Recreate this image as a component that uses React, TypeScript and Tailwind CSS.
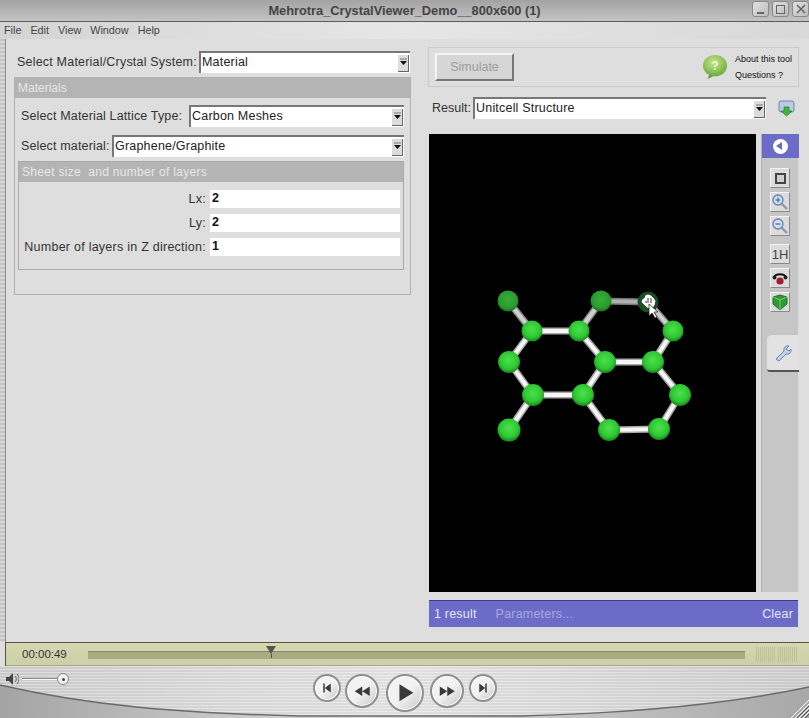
const font = "font-['Liberation_Sans',Arial,sans-serif]";

const atoms = [
  { x: 508, y: 301, r: 10.5, dim: true },
  { x: 601, y: 301, r: 10.5, dim: true },
  { x: 648, y: 302, r: 10.5, dim: true, dark: true },
  { x: 532, y: 331, r: 10.5 },
  { x: 579, y: 331, r: 10.5 },
  { x: 673, y: 331, r: 10.5 },
  { x: 509, y: 362, r: 11 },
  { x: 605, y: 362, r: 11 },
  { x: 653, y: 362, r: 11 },
  { x: 533, y: 395, r: 11 },
  { x: 583, y: 395, r: 11 },
  { x: 680, y: 395, r: 11 },
  { x: 509, y: 430, r: 11.5 },
  { x: 609, y: 430, r: 11 },
  { x: 659, y: 429, r: 11 },
];

const bonds = [
  [0, 3], [3, 4], [4, 1], [1, 2], [2, 5], [3, 6], [6, 9], [9, 10], [4, 7],
  [7, 10], [7, 8], [8, 5], [8, 11], [11, 14], [14, 13], [13, 10], [9, 12],
];

function Molecule() {
  return (
    <svg viewBox="429 134 327 458" className="w-full h-full block">
      <defs>
        <radialGradient id="atom" cx="0.5" cy="0.42" r="0.6">
          <stop offset="0" stopColor="#4ce24c" />
          <stop offset="0.65" stopColor="#2fc832" />
          <stop offset="1" stopColor="#127f18" />
        </radialGradient>
        <radialGradient id="atomDim" cx="0.5" cy="0.42" r="0.6">
          <stop offset="0" stopColor="#36b038" />
          <stop offset="0.7" stopColor="#2a9a2e" />
          <stop offset="1" stopColor="#116a16" />
        </radialGradient>
        <radialGradient id="atomDark" cx="0.5" cy="0.5" r="0.6">
          <stop offset="0" stopColor="#226e2a" />
          <stop offset="1" stopColor="#114418" />
        </radialGradient>
      </defs>
      {bonds.map(([a, b], i) => {
        const top = atoms[a].dim && atoms[b].dim;
        const mid = atoms[a].dim || atoms[b].dim;
        return (
          <g key={i}>
            <line
              x1={atoms[a].x}
              y1={atoms[a].y}
              x2={atoms[b].x}
              y2={atoms[b].y}
              stroke={top ? "#777" : mid ? "#8c8c8c" : "#a8a8a8"}
              strokeWidth="7"
            />
            <line
              x1={atoms[a].x}
              y1={atoms[a].y}
              x2={atoms[b].x}
              y2={atoms[b].y}
              stroke={top ? "#b0b0b0" : mid ? "#cfcfcf" : "#f6f6f6"}
              strokeWidth="4"
            />
          </g>
        );
      })}
      {atoms.map((a, i) => (
        <circle
          key={i}
          cx={a.x}
          cy={a.y}
          r={a.r}
          fill={a.dark ? "url(#atomDark)" : a.dim ? "url(#atomDim)" : "url(#atom)"}
        />
      ))}
      <path
        d="M648 294l3 1 3 3 2 3-1 4-2 3-3 1-3-1-3-3-3-3 1-3 2-1 1-3z"
        fill="#fff"
        stroke="#111"
        strokeWidth="0.7"
      />
      <path d="M648 298v5M651 298v5M645 302h2" stroke="#222" strokeWidth="0.9" />
      <path d="M649 304v12l3-3 3 5 2-1-3-5h4z" fill="#fff" stroke="#111" strokeWidth="0.7" />
    </svg>
  );
}

function Select({ value, className }: { value: string; className: string }) {
  return (
    <div
      className={`h-[22px] bg-white border-t-2 border-l-2 border-t-[#777] border-l-[#777] flex items-center justify-between pl-[1px] pr-[1px] ${className}`}
    >
      <span className="text-[12.5px] text-[#222] tracking-[0.2px] pb-[2px]">{value}</span>
      <span className="w-[11px] h-[17px] bg-[#dcdcdc] border-r border-b border-[#666] flex items-center justify-center">
        <svg viewBox="0 0 9 9" className="w-[9px] h-[9px]">
          <path d="M1 3h7L4.5 7z" fill="#111" />
          <path d="M1 1h7" stroke="#777" />
        </svg>
      </span>
    </div>
  );
}

function ParamRow({ label, value }: { label: string; value: string }) {
  return (
    <div className="flex items-center h-[18px]">
      <span className="w-[187px] text-right pr-[1px] text-[12.5px] text-[#333] tracking-[0.25px] whitespace-nowrap">{label}</span>
      <div className="ml-[3px] w-[190px] h-[18px] bg-white pl-[2px] text-[12.5px] font-bold text-[#111] leading-[17px]">
        {value}
      </div>
    </div>
  );
}

function ToolButton({ children, className = "" }: { children: React.ReactNode; className?: string }) {
  return (
    <div
      className={`w-[20px] h-[20px] bg-[#dcdcdc] border-r border-b border-[#8a8a8a] border-t border-l border-t-[#f2f2f2] border-l-[#f2f2f2] flex items-center justify-center ${className}`}
    >
      {children}
    </div>
  );
}

function Magnifier({ minus }: { minus?: boolean }) {
  return (
    <svg viewBox="0 0 18 18" className="w-[18px] h-[18px]">
      <line x1="10" y1="10" x2="16" y2="16" stroke="#8a93b5" strokeWidth="2.2" />
      <circle cx="7" cy="7" r="5" fill="#cfe0ee" stroke="#6d7fb0" strokeWidth="1.3" />
      <path d={minus ? "M4.5 7h5" : "M4.5 7h5M7 4.5v5"} stroke="#3c6a8c" strokeWidth="1.2" />
    </svg>
  );
}

function RoundButton({ size, icon, icon2 }: { size: string; icon: string; icon2?: string }) {
  return (
    <div
      className={`${size} rounded-full border-2 border-[#8f8f8f] bg-gradient-to-br from-[#f4f4f4] via-[#f2f2f2] to-[#c9c9c9] flex items-center justify-center shadow-[inset_0_0_0_1px_#fff]`}
    >
      <svg viewBox="0 0 24 24" className="w-3/4 h-3/4">
        <path d={icon} fill="#3a3a3a" />
        {icon2 && <path d={icon2} fill="#3a3a3a" />}
      </svg>
    </div>
  );
}

function WindowButton({ children }: { children: React.ReactNode }) {
  return (
    <div className="w-[17px] h-[16px] rounded-[3px] border border-[#8a8a8a] bg-gradient-to-br from-[#e2e2e2] to-[#bcbcbc] flex items-center justify-center">
      {children}
    </div>
  );
}

export default function App() {
  return (
    <div className={`relative w-[809px] h-[718px] overflow-hidden bg-[#dedede] flex flex-col ${font}`}>
      {/* title bar */}
      <div className="h-[22px] shrink-0 relative flex items-center justify-center bg-gradient-to-b from-[#a3a3a3] to-[#c4c4c4] border-b border-[#5c5c5c]">
        <span className="text-[12.8px] font-bold text-[#444]">Mehrotra_CrystalViewer_Demo__800x600 (1)</span>
        <div className="absolute right-0 top-[1px] flex gap-[3px]">
          <WindowButton>
            <div className="w-[7px] h-[2px] bg-[#666] mt-[7px]" />
          </WindowButton>
          <WindowButton>
            <div className="w-[9px] h-[9px] border border-[#666]" />
          </WindowButton>
          <WindowButton>
            <svg viewBox="0 0 10 10" className="w-[10px] h-[10px]">
              <path d="M1 1l8 8M9 1L1 9" stroke="#666" strokeWidth="1.6" />
            </svg>
          </WindowButton>
        </div>
      </div>

      {/* menu bar */}
      <div className="h-[17px] shrink-0 flex items-center gap-[9px] pl-[4px] bg-gradient-to-r from-[#d4d4d4] via-[#e6e6e6] to-[#d8d8d8] text-[10.8px] text-[#444]">
        <span>File</span>
        <span>Edit</span>
        <span>View</span>
        <span>Window</span>
        <span>Help</span>
      </div>

      {/* main area */}
      <div className="h-[603px] shrink-0 flex">
        <div className="w-[6px] shrink-0 border-r border-[#8a8a8a] bg-[repeating-linear-gradient(180deg,#c4c4c4_0,#c4c4c4_2px,#d6d6d6_2px,#d6d6d6_4px)]" />

        {/* left column */}
        <div className="w-[405px] shrink-0 pl-[8px] pt-[12px]">
          <div className="flex items-center h-[22px] pl-[3px]">
            <span className="w-[182px] text-[12.5px] text-[#333] tracking-[0.2px] whitespace-nowrap">Select Material/Crystal System:</span>
            <Select value="Material" className="w-[211px]" />
          </div>
          <div className="mt-[4px] w-[397px] h-[218px] border border-[#b0b0b0] flex flex-col">
            <div className="h-[20px] bg-[#b4b4b4] pl-[3px] text-[12px] leading-[20px] text-[#e8e8e8]">Materials</div>
            <div className="px-[3px]">
              <div className="mt-[7px] flex items-center pl-[3px]">
                <span className="w-[168px] text-[12.5px] text-[#333] tracking-[0.15px] whitespace-nowrap">Select Material Lattice Type:</span>
                <Select value="Carbon Meshes" className="w-[215px]" />
              </div>
              <div className="mt-[8px] flex items-center pl-[3px]">
                <span className="w-[91px] text-[12.5px] text-[#333] tracking-[0.15px] whitespace-nowrap">Select material:</span>
                <Select value="Graphene/Graphite" className="w-[292px]" />
              </div>
              <div className="mt-[4px] w-[386px] h-[109px] border border-[#aaa]">
                <div className="h-[20px] bg-[#b4b4b4] pl-[3px] text-[12px] leading-[20px] text-[#e8e8e8] tracking-[0.3px] whitespace-pre">
                  Sheet size  and number of layers
                </div>
                <div className="pt-[8px] pl-[1px] flex flex-col gap-[6px]">
                  <ParamRow label="Lx:" value="2" />
                  <ParamRow label="Ly:" value="2" />
                  <ParamRow label="Number of layers in Z direction:" value="1" />
                </div>
              </div>
            </div>
          </div>
        </div>

        {/* right column */}
        <div className="w-[398px] shrink-0 pl-[18px] pt-[8px] relative">
          <div className="-ml-[1px] w-[371px] h-[40px] border border-[#cacaca] flex items-center justify-between pl-[6px] pr-[6px]">
            <div className="w-[79px] h-[28px] bg-[#d6d6d6] border-2 border-t-[#f4f4f4] border-l-[#f4f4f4] border-r-[#777] border-b-[#777] flex items-center justify-center text-[12.5px] text-[#9c9c9c]">
              Simulate
            </div>
            <div className="flex items-center gap-[7px]">
              <svg viewBox="0 0 28 28" className="w-[26px] h-[26px]">
                <defs>
                  <radialGradient id="bubble" cx="0.45" cy="0.35" r="0.7">
                    <stop offset="0" stopColor="#c5e88a" />
                    <stop offset="1" stopColor="#6aa83a" />
                  </radialGradient>
                </defs>
                <path d="M8 22l-2 5 8-4z" fill="#6d8a4a" />
                <ellipse cx="14" cy="12.5" rx="13" ry="11.5" fill="url(#bubble)" />
                <text x="14" y="17" textAnchor="middle" fontSize="13" fill="#eaf5d8" fontFamily="Liberation Sans" fontWeight="bold">?</text>
              </svg>
              <div className="flex flex-col text-[9px] leading-[16px] text-[#111]">
                <span>About this tool</span>
                <span>Questions ?</span>
              </div>
            </div>
          </div>

          <div className="mt-[10px] flex items-center h-[22px] pl-[3px]">
            <span className="w-[40px] text-[12.5px] text-[#333]">Result:</span>
            <Select value="Unitcell Structure" className="ml-[1px] w-[293px]" />
            <svg viewBox="0 0 18 18" className="ml-[12px] w-[18px] h-[18px]">
              <rect x="1" y="2" width="15" height="11" rx="2" fill="#b9cbe6" stroke="#6f86ad" />
              <path d="M6 8h5v4h3l-5.5 5L3 12h3z" fill="#3fb53f" stroke="#1f7a1f" strokeWidth="0.7" />
            </svg>
          </div>

          <div className="mt-[15px] flex h-[458px]">
            <div className="w-[327px] shrink-0 bg-black">
              <Molecule />
            </div>
            <div className="ml-[5px] w-[37px] bg-[#c6c6c6] border-l border-[#b0b0b0] relative flex flex-col items-center">
              <div className="w-[37px] h-[24px] bg-[#6b6bc8] flex items-center justify-center">
                <div className="w-[15px] h-[15px] rounded-full bg-white flex items-center justify-center">
                  <div className="w-0 h-0 border-y-[4px] border-y-transparent border-r-[6px] border-r-[#6b6bc8] mr-[2px]" />
                </div>
              </div>
              <div className="mt-[10px] flex flex-col">
                <ToolButton>
                  <div className="w-[11px] h-[11px] border-2 border-[#444] bg-[#d0d0d0]" />
                </ToolButton>
                <ToolButton className="mt-[4px]">
                  <Magnifier />
                </ToolButton>
                <ToolButton className="mt-[4px]">
                  <Magnifier minus />
                </ToolButton>
                <ToolButton className="mt-[8px]">
                  <span className="text-[13px] text-[#444] leading-none">1H</span>
                </ToolButton>
                <ToolButton className="mt-[4px]">
                  <svg viewBox="0 0 18 18" className="w-[18px] h-[18px]">
                    <path d="M3 8a6.5 4.5 0 0 1 12 0" fill="none" stroke="#111" strokeWidth="2" />
                    <circle cx="9" cy="12" r="3.6" fill="#a01c30" />
                    <circle cx="3.5" cy="8.5" r="2" fill="#222" />
                    <circle cx="14.5" cy="8.5" r="2" fill="#222" />
                  </svg>
                </ToolButton>
                <ToolButton className="mt-[4px]">
                  <svg viewBox="0 0 18 18" className="w-[18px] h-[18px]">
                    <path d="M2 4l7-2 7 2v7l-7 6-7-6z" fill="#2e9a34" stroke="#1a5a20" strokeWidth="0.8" />
                    <path d="M2 4l7 3 7-3M9 7v10" fill="none" stroke="#8fdc8f" strokeWidth="0.8" />
                  </svg>
                </ToolButton>
              </div>
              <div className="absolute left-[5px] top-[201px] w-[32px] h-[37px] bg-[#e2e2e2] rounded-tl-[5px] rounded-bl-[3px] border-b-2 border-[#555] flex items-center justify-center">
                <svg viewBox="0 0 18 18" className="w-[18px] h-[18px]">
                  <path d="M3 16l-1-1 8-8a4 4 0 0 1 5-5l-3 3 3 2 2-2a4 4 0 0 1-5 5l-7 7z" fill="#c4d0ea" stroke="#6f84b5" strokeWidth="1" />
                </svg>
              </div>
            </div>
          </div>

          <div className="mt-[8px] w-[369px] h-[27px] bg-[#6b6bc8] border-t border-[#3c3c8c] flex items-center pl-[5px] pr-[5px] text-[12.5px] tracking-[0.2px]">
            <span className="text-[#e6e6f4]">1 result</span>
            <span className="ml-[19px] text-[#a8a8dc]">Parameters...</span>
            <span className="ml-auto text-[#e6e6f4]">Clear</span>
          </div>
        </div>
      </div>

      {/* timeline */}
      <div className="ml-[5px] h-[24px] shrink-0 flex items-center bg-gradient-to-b from-[#d4d8b2] to-[#ccd0a8] border-t border-l border-[#55583f] shadow-[inset_0_-1px_0_#a8a88c]">
        <span className="ml-[16px] w-[66px] text-[11.5px] text-[#333]">00:00:49</span>
        <div className="relative w-[657px] h-[8px] bg-[#a8ac84] border-t border-[#858a68]">
          <div className="absolute left-[178px] top-[-6px] flex flex-col items-center">
            <div className="w-0 h-0 border-x-[5px] border-x-transparent border-t-[8px] border-t-[#55554a]" />
            <div className="w-[1px] h-[4px] bg-[#55554a]" />
          </div>
        </div>
        <div className="ml-[11px] flex gap-[2px]">
          <div className="w-[20px] h-[15px] bg-[repeating-linear-gradient(90deg,#bcc098_0,#bcc098_1px,#d0d4ac_1px,#d0d4ac_2px)]" />
          <div className="w-[20px] h-[15px] bg-[repeating-linear-gradient(90deg,#bcc098_0,#bcc098_1px,#d0d4ac_1px,#d0d4ac_2px)]" />
        </div>
      </div>

      {/* transport */}
      <div className="relative flex-1 bg-gradient-to-r from-[#d0d0d0] via-[#e6e6e6] to-[#cfcfcf]">
        <div className="absolute inset-0 bg-[repeating-linear-gradient(180deg,rgba(255,255,255,0.25)_0,rgba(255,255,255,0.25)_1px,rgba(0,0,0,0.03)_1px,rgba(0,0,0,0.03)_3px)]" />
        <svg viewBox="0 0 809 52" className="absolute inset-0 w-full h-full">
          <defs>
            <linearGradient id="metal" x1="0" x2="1" y1="0" y2="0">
              <stop offset="0" stopColor="#a4a4a4" />
              <stop offset="0.45" stopColor="#dcdcdc" />
              <stop offset="1" stopColor="#a8a8a8" />
            </linearGradient>
          </defs>
          <path d="M0 19C90 40 180 47 300 50L520 50C640 47 730 38 809 21V52H0z" fill="url(#metal)" />
          <path d="M0 19C90 40 180 47 300 50L520 50C640 47 730 38 809 21" fill="none" stroke="#6b6b6b" strokeWidth="1.5" />
          <path d="M795 52l14-14M799 52l10-10M803 52l6-6M791 52l18-18" stroke="#fff" strokeWidth="1" />
          <path d="M797 52l12-12M801 52l8-8M805 52l4-4" stroke="#555" strokeWidth="1" />
        </svg>
        <div className="absolute left-[5px] top-[6px] flex items-center">
          <svg viewBox="0 0 14 14" className="w-[14px] h-[14px]">
            <path d="M1 5h3l4-4v12l-4-4H1z" fill="#444" />
            <path d="M10 4a4 4 0 0 1 0 6M12 2a7 7 0 0 1 0 10" fill="none" stroke="#666" />
          </svg>
          <div className="ml-[3px] w-[35px] h-[2px] bg-[#fafafa] border-t border-[#888]" />
          <div className="w-[12px] h-[12px] rounded-full border border-[#888] bg-[#f0f0f0] flex items-center justify-center">
            <div className="w-[3px] h-[3px] rounded-full bg-[#444]" />
          </div>
        </div>
        <div className="relative flex items-start pl-[313px] pt-[8px]">
          <RoundButton size="w-[28px] h-[28px]" icon="M7 6h2v12H7zM9 12l8-6v12z" />
          <div className="ml-[4px]">
            <RoundButton size="w-[34px] h-[34px]" icon="M4 12l8-5v10z" icon2="M12 12l8-5v10z" />
          </div>
          <div className="ml-[7px]">
            <RoundButton size="w-[38px] h-[38px]" icon="M7 4l13 8-13 8z" />
          </div>
          <div className="ml-[6px]">
            <RoundButton size="w-[34px] h-[34px]" icon="M4 7l8 5-8 5z" icon2="M12 7l8 5-8 5z" />
          </div>
          <div className="ml-[5px]">
            <RoundButton size="w-[28px] h-[28px]" icon="M15 6h2v12h-2zM7 6l8 6-8 6z" />
          </div>
        </div>
      </div>
    </div>
  );
}
